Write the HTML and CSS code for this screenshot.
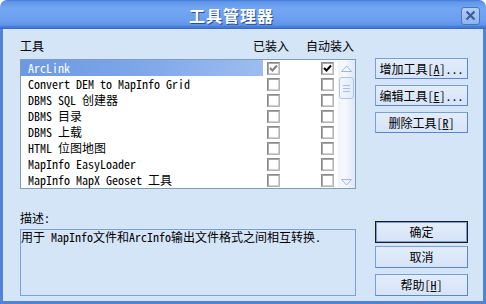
FILE: index.html
```html
<!DOCTYPE html>
<html>
<head>
<meta charset="utf-8">
<title>工具管理器</title>
<link rel="stylesheet" href="styles.css">
</head>
<body>
<div class="window">
  <div class="titlebar">
    <div class="title">工具管理器</div>
    <div class="close">
      <svg width="19" height="18" viewBox="0 0 19 18"><path d="M5.5 4.5 L13.5 12.5 M13.5 4.5 L5.5 12.5" stroke="#3d5c9c" stroke-width="2.2" fill="none"/></svg>
    </div>
  </div>
  <div class="frame">
    <div class="left">
      <div class="headers">
        <span>工具</span><span>已装入</span><span>自动装入</span>
      </div>
      <div class="listbox">
        <div class="rows">
          <div class="row sel"><span class="name">ArcLink</span><span class="cb on dim"></span><span class="cb on"></span></div>
          <div class="row"><span class="name">Convert DEM to MapInfo Grid</span><span class="cb"></span><span class="cb"></span></div>
          <div class="row"><span class="name">DBMS SQL 创建器</span><span class="cb"></span><span class="cb"></span></div>
          <div class="row"><span class="name">DBMS 目录</span><span class="cb"></span><span class="cb"></span></div>
          <div class="row"><span class="name">DBMS 上载</span><span class="cb"></span><span class="cb"></span></div>
          <div class="row"><span class="name">HTML 位图地图</span><span class="cb"></span><span class="cb"></span></div>
          <div class="row"><span class="name">MapInfo EasyLoader</span><span class="cb"></span><span class="cb"></span></div>
          <div class="row"><span class="name">MapInfo MapX Geoset 工具</span><span class="cb"></span><span class="cb"></span></div>
        </div>
        <div class="scrollbar">
          <div class="arrow">
            <svg width="17" height="16" viewBox="0 0 17 16"><path d="M3.5 11.5 L8.5 6 L13.5 11.5 Z" fill="#f4f7fd" stroke="#9fb6da" stroke-width="1"/></svg>
          </div>
          <div class="thumb"><i></i><i></i><i></i></div>
          <div class="track"></div>
          <div class="arrow">
            <svg width="17" height="16" viewBox="0 0 17 16"><path d="M3.5 7.5 L8.5 13 L13.5 7.5 Z" fill="#f4f7fd" stroke="#9fb6da" stroke-width="1"/></svg>
          </div>
        </div>
      </div>
      <div class="desc-label">描述:</div>
      <div class="desc">用于 MapInfo文件和ArcInfo输出文件格式之间相互转换.</div>
    </div>
    <div class="right">
      <div class="btn">增加工具[<u>A</u>]...</div>
      <div class="btn gap6">编辑工具[<u>E</u>]...</div>
      <div class="btn gap6">删除工具[<u>R</u>]</div>
      <div class="spacer"></div>
      <div class="btn big default">确定</div>
      <div class="btn big gap3">取消</div>
      <div class="btn big gap6">帮助[<u>H</u>]</div>
    </div>
  </div>
</div>
</body>
</html>
```
FILE: styles.css
```css
* { box-sizing: border-box; margin: 0; padding: 0; }
html, body { width: 486px; height: 304px; overflow: hidden; background: #ffffff; }
body {
  font-family: "Noto Sans Mono CJK SC", "Noto Sans CJK SC", "Liberation Mono", monospace;
  font-size: 12px;
  color: #000;
}
.window { width: 486px; height: 304px; display: flex; flex-direction: column; }

.titlebar {
  height: 29px;
  display: flex;
  align-items: flex-start;
  border-radius: 7px 7px 0 0;
  background: linear-gradient(#4079da 0, #6196ea 2px, #74a7f2 9px, #6a9eee 20px, #5f94e8 25px, #4679d8 27px, #3868c8 29px);
}
.title {
  flex: 1;
  text-align: center;
  color: #fff;
  font-family: "Noto Sans CJK SC", sans-serif;
  font-weight: bold;
  font-size: 16px;
  line-height: 20px;
  letter-spacing: 1px;
  padding-top: 5px;
  padding-left: 2px;
  text-shadow: 1px 1px 0 #2a4f98;
}
.close {
  width: 19px;
  height: 18px;
  margin-top: 7px;
  margin-right: 6px;
  border: 1px solid #4a74c4;
  border-radius: 3px;
  background: linear-gradient(#b4cff6, #8fb3ee);
  display: flex;
}
.close svg { margin: -1px; }

.frame {
  flex: 1;
  background: #d5e5f8;
  border: 3px solid #4f82d8;
  border-top: none;
  display: grid;
  grid-template-columns: 336px 93px;
  column-gap: 19px;
  padding-left: 17px;
}

.left { display: flex; flex-direction: column; padding-top: 10px; }
.headers {
  height: 20px;
  line-height: 14px;
  display: grid;
  grid-template-columns: 233px 53px auto;
}
.listbox {
  height: 130px;
  border: 1px solid #7f9db9;
  background: #fff;
  display: flex;
}
.rows { flex: 1; display: flex; flex-direction: column; }
.row {
  height: 16px;
  display: grid;
  grid-template-columns: 242px 13px 13px;
  column-gap: 4px;
  align-items: center;
}
.row .cb:last-child { margin-left: 37px; }
.row .name {
  height: 16px;
  line-height: 16px;
  padding-left: 7px;
  white-space: nowrap;
}
.row.sel .name {
  color: #fff;
  background: linear-gradient(90deg, #6b99e2, #7ea7ea 50%, #9dbdf0);
}
.cb {
  width: 13px;
  height: 13px;
  border: 1px solid #8a8a8a;
  border-right-color: #b4b4b4;
  border-bottom-color: #b4b4b4;
  box-shadow: inset 1px 1px 0 #a8a8a8, inset -1px -1px 0 #d0d0d0;
  background-color: #fff;
}
.cb.on {
  background: #fff url("data:image/svg+xml;utf8,<svg xmlns='http://www.w3.org/2000/svg' width='11' height='11'><path d='M2 5 L4.5 7.5 L9 2.5' stroke='black' stroke-width='2' fill='none'/></svg>") no-repeat 0 0;
}
.cb.on.dim {
  background: #fff url("data:image/svg+xml;utf8,<svg xmlns='http://www.w3.org/2000/svg' width='11' height='11'><path d='M2 5 L4.5 7.5 L9 2.5' stroke='%23808080' stroke-width='2' fill='none'/></svg>") no-repeat 0 0;
}

.scrollbar {
  width: 17px;
  display: flex;
  flex-direction: column;
  background: linear-gradient(90deg, #eef3fc, #f6f8fd 40%, #dfe8f7);
}
.arrow { height: 16px; display: flex; }
.thumb {
  height: 22px;
  margin: 1px 1px 0 1px;
  border: 1px solid #b0c3e2;
  border-radius: 3px;
  background: linear-gradient(90deg, #f3f6fd, #e2eafa);
  display: flex;
  flex-direction: column;
  justify-content: center;
  align-items: center;
  gap: 2px;
}
.thumb i { display: block; width: 7px; height: 1px; background: #a9bbdc; }
.track { flex: 1; }

.desc-label { margin-top: 22px; height: 14px; line-height: 14px; }
.desc {
  margin-top: 4px;
  height: 67px;
  border: 1px solid #7a9fdc;
  line-height: 13px;
  white-space: nowrap;
}

.right { display: flex; flex-direction: column; padding-top: 29px; padding-bottom: 5px; }
.btn {
  height: 21px;
  border: 1px solid #7a9edb;
  border-right-color: #5f85c8;
  border-bottom-color: #5f85c8;
  background: linear-gradient(#e3edfa, #d6e4f8);
  display: flex;
  align-items: center;
  justify-content: center;
  line-height: 14px;
  white-space: nowrap;
}
.btn.big { height: 22px; }
.btn.default { border: 1px solid #1c1c1c; box-shadow: inset 0 0 0 1px #7a9edb; }
.gap6 { margin-top: 6px; }
.gap3 { margin-top: 3px; }
.spacer { flex: 1; }
u { text-decoration: underline; }
```
